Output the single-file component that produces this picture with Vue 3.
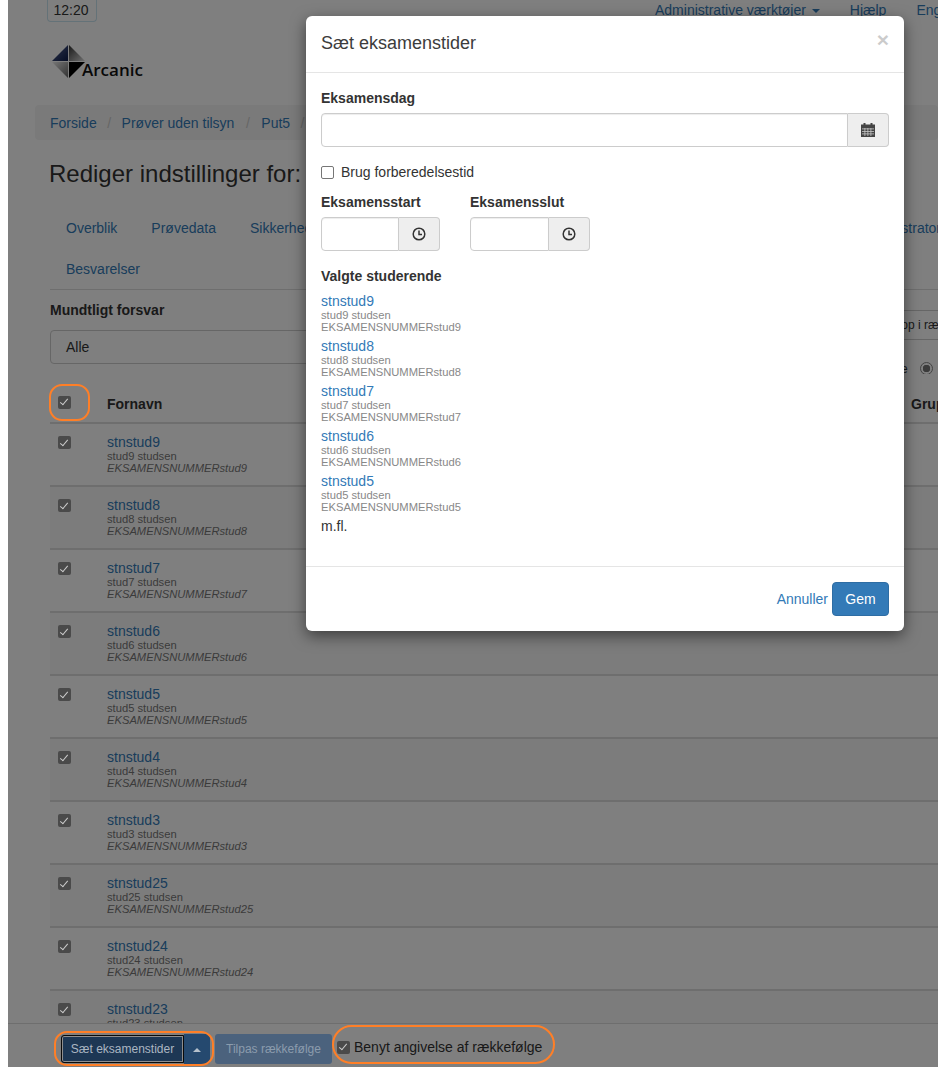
<script setup>
const nums = ['9','8','7','6','5','4','3','25','24']
const picked = ['9','8','7','6','5']
</script>

<template>
  <div class="page">
    <div class="topbar">
      <span class="clock">12:20</span>
      <div class="topnav">
        <a>Administrative værktøjer <i class="caret"></i></a>
        <a>Hjælp</a>
        <a>English</a>
      </div>
    </div>
    <div class="logo">
      <svg width="38" height="34" viewBox="0 0 38 34">
        <defs>
          <linearGradient id="lg1" x1="0" y1="0" x2="1" y2="1"><stop offset="0" stop-color="#5a6a9a"/><stop offset="1" stop-color="#0c1a48"/></linearGradient>
          <linearGradient id="lg2" x1="0" y1="0" x2="1" y2="1"><stop offset="0" stop-color="#333"/><stop offset="1" stop-color="#ddd"/></linearGradient>
          <linearGradient id="lg3" x1="0" y1="0" x2="1" y2="1"><stop offset="0" stop-color="#eee"/><stop offset="1" stop-color="#666"/></linearGradient>
        </defs>
        <polygon points="16,0 16,16 0,16" fill="url(#lg1)"/>
        <polygon points="17,0 17,16 33,16" fill="url(#lg2)"/>
        <polygon points="0,17 16,17 16,33" fill="url(#lg3)"/>
        <polygon points="17,17 33,17 17,33" fill="#000"/>
      </svg>
      <span class="logotext">Arcanic</span>
    </div>
    <div class="crumb">
      <a>Forside</a><span class="sep">/</span><a>Prøver uden tilsyn</a><span class="sep">/</span><a>Put5</a><span class="sep">/</span>
    </div>
    <h1 class="title">Rediger indstillinger for:</h1>
    <div class="tabs">
      <div class="tabrow">
        <a class="tab">Overblik</a>
        <a class="tab">Prøvedata</a>
        <a class="tab">Sikkerhed</a>
        <a class="tab push">Administrator</a>
      </div>
      <div class="tabrow second">
        <a class="tab">Besvarelser</a>
      </div>
    </div>
    <div class="filters">
      <div class="filter-left">
        <label class="flabel">Mundtligt forsvar</label>
        <div class="select">Alle</div>
      </div>
      <div class="filter-right">
        <div class="search">Søg op i rækkefølge</div>
        <div class="radio-row"><span class="radio-text">e</span><span class="radio"></span></div>
      </div>
    </div>
    <div class="thead">
      <span class="cell-check"><span class="cb"></span></span>
      <span class="th">Fornavn</span>
      <span class="th group">Gruppe</span>
    </div>
    <div class="rows">
      <div v-for="n in nums" :key="n" class="row">
        <span class="cell-check"><span class="cb"></span></span>
        <div class="who">
          <a class="uname">stnstud{{ n }}</a>
          <small class="full">stud{{ n }} studsen</small>
          <em class="exam">EKSAMENSNUMMERstud{{ n }}</em>
        </div>
      </div>
      <div class="row">
        <span class="cell-check"><span class="cb"></span></span>
        <div class="who">
          <a class="uname">stnstud23</a>
          <small class="full">stud23 studsen</small>
        </div>
      </div>
    </div>
    <div class="actionbar">
      <button class="btn active">Sæt eksamenstider</button>
      <button class="btn splitcaret"><i class="caret up"></i></button>
      <button class="btn muted">Tilpas rækkefølge</button>
      <label class="order"><span class="cb"></span>Benyt angivelse af rækkefølge</label>
    </div>

    <div class="backdrop"></div>

    <i class="ring r1"></i>
    <i class="ring r2"></i>
    <i class="ring r3"></i>

    <div class="modal">
      <header class="mhead">
        <span class="mtitle">Sæt eksamenstider</span>
        <span class="close">×</span>
      </header>
      <div class="mbody">
        <label class="lbl">Eksamensdag</label>
        <div class="group-input">
          <div class="inp grow"></div>
          <span class="addon">
            <svg width="14" height="14" viewBox="0 0 14 14"><path d="M2.5 0h2v1.5h5V0h2v1.5H14V14H0V1.5h2.5z" fill="#444"/><g fill="#fff" opacity=".7"><rect x="1" y="5.5" width="12" height=".8"/><rect x="1" y="8" width="12" height=".8"/><rect x="1" y="10.5" width="12" height=".8"/><rect x="3.5" y="5" width=".8" height="8"/><rect x="6.5" y="5" width=".8" height="8"/><rect x="9.5" y="5" width=".8" height="8"/></g></svg>
          </span>
        </div>
        <label class="prep"><span class="cb-empty"></span>Brug forberedelsestid</label>
        <div class="times">
          <div class="time">
            <label class="lbl">Eksamensstart</label>
            <div class="group-input">
              <div class="inp t"></div>
              <span class="addon">
                <svg width="14" height="14" viewBox="0 0 14 14" fill="none" stroke="#333" stroke-width="1.5"><circle cx="7" cy="7" r="5.8"/><path d="M7 3.5V7.5H10"/></svg>
              </span>
            </div>
          </div>
          <div class="time">
            <label class="lbl">Eksamensslut</label>
            <div class="group-input">
              <div class="inp t t2"></div>
              <span class="addon">
                <svg width="14" height="14" viewBox="0 0 14 14" fill="none" stroke="#333" stroke-width="1.5"><circle cx="7" cy="7" r="5.8"/><path d="M7 3.5V7.5H10"/></svg>
              </span>
            </div>
          </div>
        </div>
        <div class="lbl chosen">Valgte studerende</div>
        <div v-for="n in picked" :key="n" class="pick">
          <a class="uname2">stnstud{{ n }}</a>
          <small class="sub">stud{{ n }} studsen</small>
          <small class="sub">EKSAMENSNUMMERstud{{ n }}</small>
        </div>
        <p class="more">m.fl.</p>
      </div>
      <footer class="mfoot">
        <a class="cancel">Annuller</a>
        <button class="save">Gem</button>
      </footer>
    </div>
  </div>
</template>

<style>
html, body { margin: 0; background: #fff; }
</style>

<style scoped>
.page {
  position: relative;
  isolation: isolate;
  margin-left: 8px;
  width: 930px;
  height: 1067px;
  overflow: hidden;
  background: #fff;
  font-family: "Liberation Sans", Arial, sans-serif;
  font-size: 14px;
  line-height: 20px;
  color: #333;
}
a { color: #337ab7; text-decoration: none; }
.topbar { display: flex; justify-content: space-between; height: 36px; padding: 0 0 0 39px; }
.clock {
  box-sizing: border-box; width: 50px; height: 22px; padding-right: 2px;
  border: 1px solid #c8e4f0; border-top: none; border-radius: 0 0 4px 4px;
  text-align: center; line-height: 20px;
}
.topnav { display: flex; gap: 30px; width: 283px; white-space: nowrap; overflow: hidden; flex: none; line-height: 20px; }
.caret { display: inline-block; width: 0; height: 0; margin-left: 2px; vertical-align: middle; border-top: 4px solid; border-left: 4px solid transparent; border-right: 4px solid transparent; }
.caret.up { border-top: 0; border-bottom: 4px solid #b4c0cc; margin-left: 0; }
.logo { display: flex; align-items: flex-end; height: 34px; margin: 9px 0 0 44px; }
.logotext { font-family: "Open Sans", sans-serif; font-weight: 600; font-size: 17px; color: #111; line-height: 20px; margin-left: -8px; margin-bottom: -1px; }
.crumb { margin: 26px 0 0 27px; height: 35px; background: #f5f5f5; border-radius: 4px; padding: 0 15px; display: flex; align-items: center; }
.sep { color: #ccc; padding: 0 10.5px; }
.crumb .sep:nth-of-type(2) { padding: 0 11.5px; }
.title { font-size: 24px; line-height: 26px; font-weight: 400; margin: 21px 0 0 41px; }
.tabs { margin: 20px 0 0 42px; border-bottom: 1px solid #ddd; }
.tabrow { display: flex; height: 41px; align-items: center; padding-left: 16px; gap: 34px; white-space: nowrap; }
.tab.push { margin-left: auto; margin-right: -3px; }
.filters { display: flex; justify-content: space-between; height: 64px; margin: 10px 0 0 42px; }
.filter-left { width: 830px; flex: none; }
.flabel { display: block; font-weight: 700; height: 30px; line-height: 20px; }
.select { box-sizing: border-box; height: 34px; border: 1px solid #ccc; border-radius: 4px; padding: 0 15px; line-height: 32px; }
.filter-right { width: 58px; height: 74px; flex: none; overflow: hidden; }
.search { box-sizing: border-box; height: 30px; margin-top: 10px; border: 1px solid #ccc; border-width: 1px 0; white-space: nowrap; font-size: 12px; line-height: 28px; text-indent: -4px; }
.radio-row { display: flex; align-items: center; padding: 22px 0 0 21px; height: 13px; }
.radio-text { font-size: 12px; width: 19px; flex: none; }
.radio { display: block; box-sizing: border-box; width: 13px; height: 13px; border-radius: 50%; border: 1px solid #888; background: radial-gradient(circle, #777 0 3.5px, #fff 4px); }
.thead { position: relative; display: flex; align-items: center; margin: 21px 0 0 42px; height: 37px; border-bottom: 2px solid #ddd; }
.thead .cell-check { margin-top: -3px; }
.cell-check { width: 57px; flex: none; padding-left: 8px; box-sizing: border-box; }
.th { font-weight: 700; }
.group { position: absolute; left: 861px; white-space: nowrap; }
.cb { display: block; flex: none; width: 13px; height: 13px; border-radius: 2px; background: #4a4a4a; position: relative; z-index: 2; }
.cb::after { content: ""; position: absolute; left: 4px; top: 1.5px; width: 3px; height: 7px; border: solid #ccc; border-width: 0 1.8px 1.8px 0; transform: rotate(40deg); }
.rows { margin-left: 42px; }
.row { display: flex; height: 63px; box-sizing: border-box; border-bottom: 2px solid #ddd; padding-top: 11px; }
.row .cell-check { margin-top: 1px; }
.row:nth-child(even) { background: #f9f9f9; }
.who { display: flex; flex-direction: column; }
.uname { font-size: 14px; line-height: 15px; color: #337ab7; }
.full { font-size: 11.2px; line-height: 12px; font-weight: 400; color: #777; }
.exam { font-size: 11.2px; line-height: 12px; color: #777; }
.actionbar {
  position: absolute; left: 0; right: 0; bottom: 0; height: 44px;
  background: #fff; border-top: 1px solid #ddd;
  display: flex; align-items: center; padding: 7px 0 0 53px; box-sizing: border-box;
}
.btn { position: relative; z-index: 2; box-sizing: border-box; height: 30px; border: 0; font: 12px/18px "Liberation Sans", Arial, sans-serif; padding: 0; white-space: nowrap; }
.active { width: 123px; height: 28px; background: #1d3754; color: #abb6c2; border: 1px solid #0a0a0a; box-shadow: inset 0 0 0 1px #8e8e8e; border-radius: 3px 0 0 3px; }
.splitcaret { width: 26px; background: #25496f; border-radius: 0 3px 3px 0; margin-right: 5px; }
.muted { width: 117px; background: #4b627d; color: #8b9cad; border-radius: 3px; margin-right: 5px; }
.order { display: flex; align-items: center; gap: 4px; margin-top: -4px; color: #333; white-space: nowrap; }
.backdrop { position: absolute; inset: 0; z-index: 1; background: #000; opacity: .5; }
.ring { position: absolute; z-index: 2; display: block; box-sizing: border-box; border: 2.5px solid #ff7f27; border-radius: 13px; }
.r1 { left: 41px; top: 384px; width: 41px; height: 37px; }
.r2 { left: 46px; top: 1031px; width: 160px; height: 35px; }
.r3 { left: 324px; top: 1025px; width: 223px; height: 39px; border-radius: 20px; }
.modal {
  position: absolute; z-index: 3; left: 298px; top: 16px; width: 598px; height: 615px;
  background: #fff; border-radius: 6px;
  box-shadow: 0 5px 15px rgba(0,0,0,.5);
  display: flex; flex-direction: column;
}
.mhead { box-sizing: border-box; height: 57px; border-bottom: 1px solid #e5e5e5; padding: 15px; position: relative; }
.mtitle { font-size: 18px; line-height: 24px; color: #3c3c3c; }
.close { position: absolute; right: 15px; top: 11px; font-size: 21px; font-weight: 700; line-height: 26px; color: #000; opacity: .2; }
.mbody { flex: 1; padding: 15px; }
.lbl { display: block; font-weight: 700; line-height: 20px; }
.group-input { display: flex; height: 34px; margin-top: 5px; }
.inp { box-sizing: border-box; border: 1px solid #ccc; border-radius: 4px 0 0 4px; box-shadow: inset 0 1px 1px rgba(0,0,0,.075); }
.grow { flex: 1; }
.t { width: 78px; }
.t2 { width: 79px; }
.addon { box-sizing: border-box; width: 41px; background: #eee; border: 1px solid #ccc; border-left: 0; border-radius: 0 4px 4px 0; display: flex; align-items: center; justify-content: center; }
.prep { display: flex; align-items: center; gap: 7px; margin-top: 15px; height: 20px; }
.cb-empty { box-sizing: border-box; width: 13px; height: 13px; border: 1px solid #767676; border-radius: 2px; background: #fff; }
.times { display: flex; gap: 30px; margin-top: 10px; }
.chosen { margin-top: 15px; margin-bottom: 5px; }
.pick { display: flex; flex-direction: column; margin-bottom: 3px; }
.uname2 { font-size: 14px; line-height: 20px; margin-bottom: -2px; }
.sub { font-size: 11.2px; line-height: 12px; color: #888; }
.more { margin: 1px 0 0; }
.mfoot { box-sizing: border-box; height: 65px; border-top: 1px solid #e5e5e5; padding: 15px; display: flex; justify-content: flex-end; align-items: center; gap: 4px; }
.save { box-sizing: border-box; width: 57px; height: 34px; border: 1px solid #2e6da4; background: #337ab7; color: #fff; border-radius: 4px; font: 14px/20px "Liberation Sans", Arial, sans-serif; }
</style>
